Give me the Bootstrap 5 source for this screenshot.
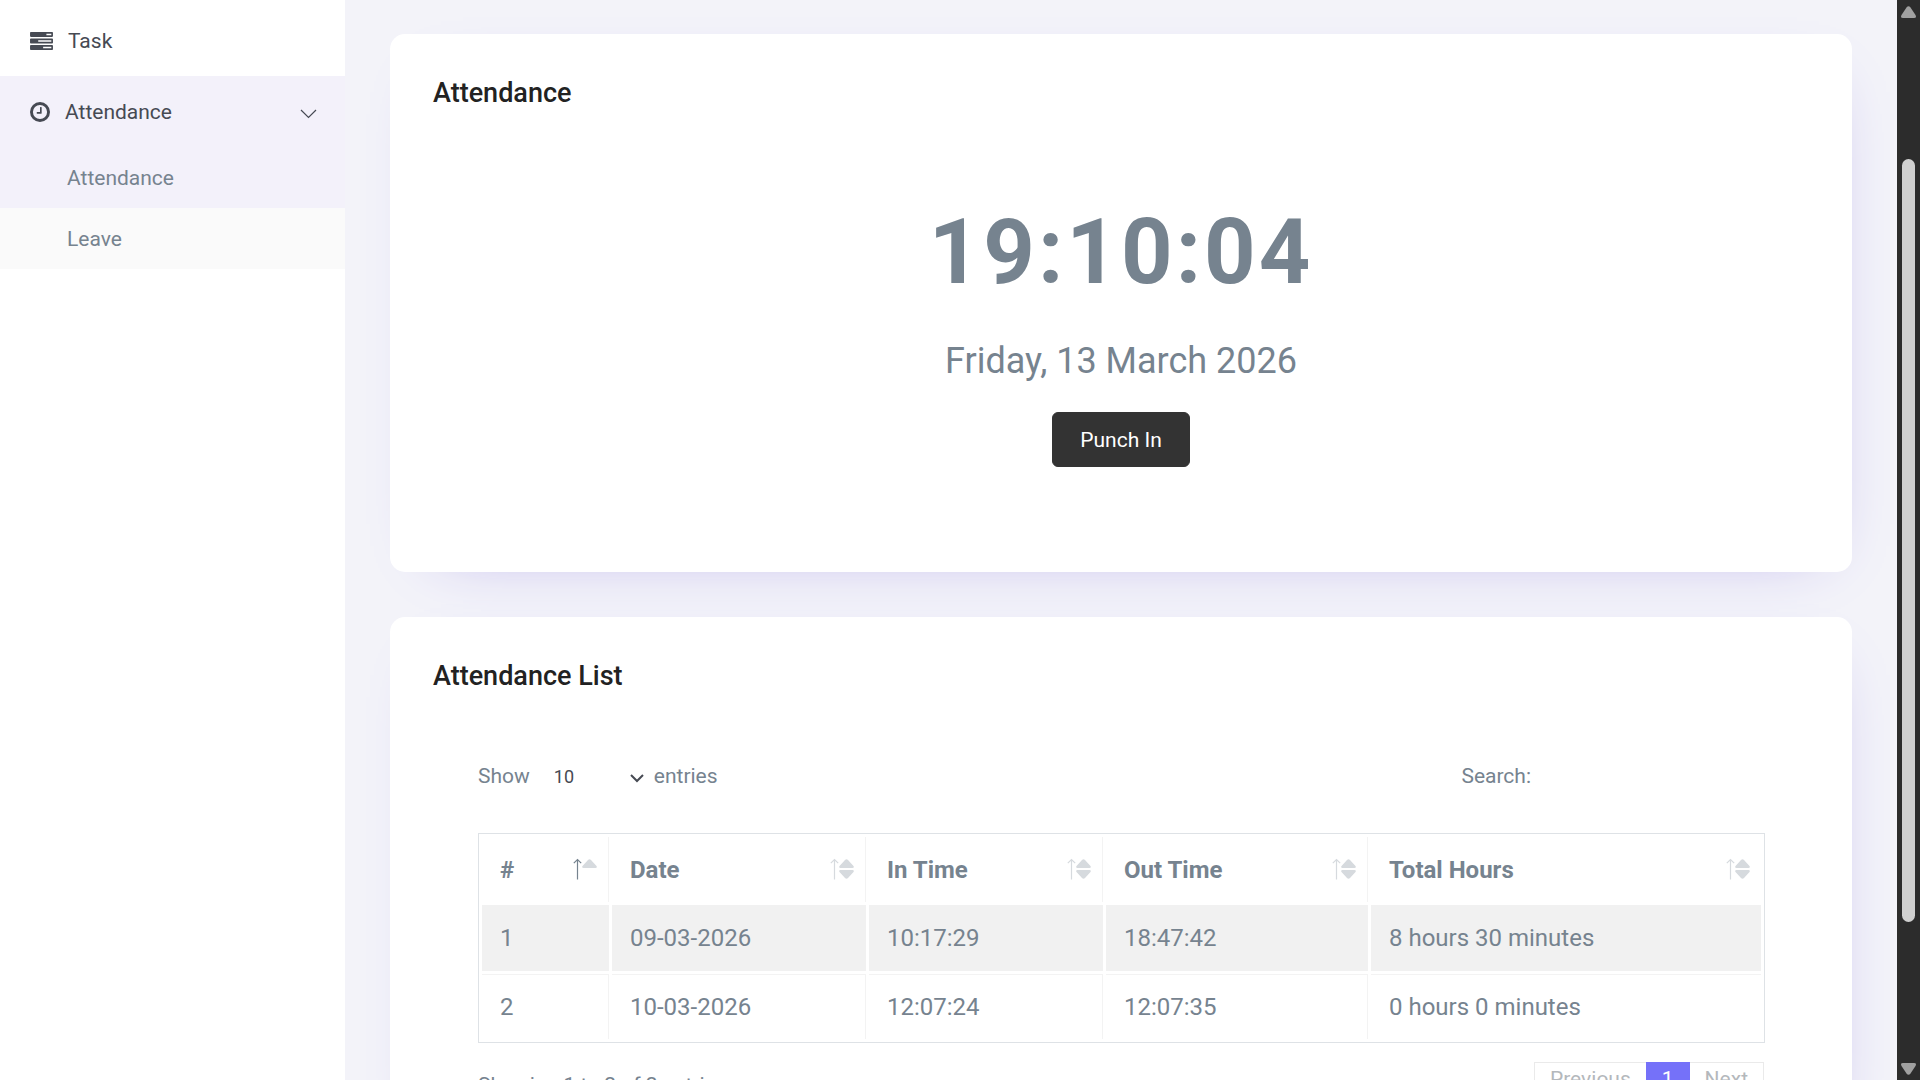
<!DOCTYPE html>
<html lang="en">
<head>
<meta charset="utf-8">
<meta name="viewport" content="width=device-width, initial-scale=1">
<title>Attendance</title>
<link href="https://cdn.jsdelivr.net/npm/bootstrap@5.3.0/dist/css/bootstrap.min.css" rel="stylesheet">
<style>
  body { font-family: Roboto, "Liberation Sans", sans-serif; font-size: 21px; line-height: 30px; color: #76838f; background: #f3f3f9; }
  a { text-decoration: none; }

  .side-panel { width: 345px; padding-top: 5px; }
  .side-link { display: flex; align-items: center; gap: 15px; height: 71px; padding: 0 28px 0 30px; color: #464a53; }
  .side-link.open { background: #f3f1fa; }
  .side-link svg { fill: currentColor; }
  .side-sub a { display: flex; align-items: center; height: 61px; padding-left: 67px; color: #76838f; background: #fafafa; }
  .side-sub a.current { background: #f3f1fa; }

  .main-area { padding: 34px 45px; }
  .panel { border: 0; border-radius: 15px; padding: 44px 43px; box-shadow: 9px 16px 62px -42px #a99de7; margin-bottom: 45px; }
  .panel-title { font-size: 27px; line-height: 30px; font-weight: 500; color: #222; margin: 0; }

  .clock-box { padding: 91px 0 61px; }
  .clock-time { font-size: 90px; line-height: 108px; font-weight: 700; letter-spacing: 3px; }
  .clock-date { font-size: 36px; line-height: 44px; margin: 32px 0 29px; }
  .btn-punch { --bs-btn-color: #fff; --bs-btn-bg: #333; --bs-btn-border-color: #333; --bs-btn-hover-color: #fff; --bs-btn-hover-bg: #222; --bs-btn-hover-border-color: #222;
    font-size: 21px; line-height: 31px; padding: 12px 27px 10px; border-radius: 6px; }

  .list-box { padding: 58px 45px 0; }
  .list-tools { height: 54px; margin-bottom: 30px; }
  .len-select { width: 104px; height: 54px; margin: 0 10px; padding: 0 20px 0 14px; border: 0; font-size: 18px; color: #464a53; background-color: transparent;
    background-image: url("data:image/svg+xml,%3csvg xmlns='http://www.w3.org/2000/svg' viewBox='0 0 14 10'%3e%3cpath fill='none' stroke='%23464a53' stroke-width='2' d='M1 1l6 6 6-6'/%3e%3c/svg%3e");
    background-size: 14px 10px; background-position: right 0 top 25px; }
  .find-input { width: 225px; height: 54px; border: 0; margin-left: 8px; background: transparent; }

  .att-table { table-layout: fixed; border-collapse: separate; border-spacing: 3px; border: 1px solid #dee2e6; font-size: 24px; line-height: 35px; color: #76838f; margin: 0; }
  .att-table th, .att-table td { padding: 15px 17px 15px 18px; border: 0 solid #f3f3f3; border-right-width: 1px; background: transparent; box-shadow: none; color: #76838f; }
  .att-table td { border-top-width: 1px; }
  .att-table tbody tr:last-child td { padding-bottom: 14px; }
  .att-table th:last-child, .att-table td:last-child { border-right-width: 0; }
  .att-table tbody tr:nth-child(odd) td { background: #f1f1f1; border-color: #f1f1f1; }
  .att-table th { position: relative; font-weight: 700; padding-top: 16px; padding-bottom: 14px; }
  .sort-mark { position: absolute; right: 11px; top: 21px; width: 24px; height: 22px; color: #d6dade; }
  .asc .sort-mark .shaft { stroke: #76838f; }

  .info-line { padding-top: 27px; }
  .pager { margin-top: 19px; --bs-pagination-border-radius: 0; }
  .pager .page-link { font-size: 21px; line-height: 26px; padding: 3px 15px 7px; color: #b4b8bc; background: #fff; border: 1px solid #eaeaea; border-radius: 0; }
  .pager .active .page-link { color: #fff; background: #7571f9; border-color: #7571f9; }

  .scroll-rail { width: 23px; background: #2c2c2c; padding: 6px 0 5px; }
  .scroll-gap { flex: 141 0 0; }
  .scroll-thumb { width: 13px; flex: 763 0 0; border-radius: 7px; background: #d0d0d0; }
</style>
<script src="https://cdn.jsdelivr.net/npm/bootstrap@5.3.0/dist/js/bootstrap.bundle.min.js"></script>
</head>
<body>
<div class="d-flex vh-100 overflow-hidden">
  <nav class="side-panel bg-white flex-shrink-0">
    <a class="side-link" href="#task">
      <svg width="23" height="18" viewBox="0 0 1792 1408"><path fill-rule="evenodd" d="M64 0h1664q64 0 64 64v256q0 64-64 64H64Q0 384 0 320V64Q0 0 64 0zM1280 128v128h384V128zM64 512h1664q64 0 64 64v256q0 64-64 64H64Q0 896 0 832V576Q0 512 64 512zM640 640v128h1024V640zM64 1024h1664q64 0 64 64v256q0 64-64 64H64Q0 1408 0 1344v-256Q0 1024 64 1024zM1024 1152v128h640v-128z"/></svg>
      <span>Task</span>
    </a>
    <a class="side-link open" href="#attendance">
      <svg width="20" height="20" viewBox="0 0 1536 1536"><path fill-rule="evenodd" d="M768 0a768 768 0 1 1 0 1536a768 768 0 1 1 0-1536zM768 224a544 544 0 1 0 0 1088a544 544 0 1 0 0-1088zM800 384h64q32 0 32 32v448q0 32-32 32H544q-32 0-32-32v-64q0-32 32-32h224V416q0-32 32-32z"/></svg>
      <span>Attendance</span>
      <svg class="ms-auto mt-1" width="17" height="10" viewBox="0 0 17 10"><path d="M1 1l7.500 7.500L16 1" fill="none" stroke="currentColor" stroke-width="1.200"/></svg>
    </a>
    <div class="side-sub">
      <a class="current" href="#attendance">Attendance</a>
      <a href="#leave">Leave</a>
    </div>
  </nav>

  <main class="main-area flex-grow-1 overflow-hidden">
    <section class="card panel">
      <h4 class="panel-title">Attendance</h4>
      <div class="clock-box text-center">
        <div class="clock-time">19:10:04</div>
        <div class="clock-date">Friday, 13 March 2026</div>
        <button type="button" class="btn btn-punch">Punch In</button>
      </div>
    </section>

    <section class="card panel">
      <h4 class="panel-title">Attendance List</h4>
      <div class="list-box">
        <div class="list-tools d-flex justify-content-between align-items-center">
          <div class="d-flex align-items-center">
            <label for="len">Show</label>
            <select id="len" class="form-select len-select"><option>10</option><option>25</option><option>50</option><option>100</option></select>
            <label for="len">entries</label>
          </div>
          <div class="d-flex align-items-center">
            <label for="find">Search:</label>
            <input id="find" type="search" class="find-input">
          </div>
        </div>
        <table class="table att-table w-100">
          <colgroup><col style="width:127px"><col style="width:254px"><col style="width:234px"><col style="width:262px"><col style="width:390px"></colgroup>
          <thead>
            <tr>
              <th class="asc">#<svg class="sort-mark" viewBox="0 0 24 22"><path class="shaft" d="M4.500 21.500V2M.8 5.200 4.500 1.500l3.700 3.700" fill="none" stroke="currentColor" stroke-width="1.200"/><path fill="currentColor" d="M15 2q1.500-1.500 3 0l5.500 6q1 2-1 2h-12q-2 0-1-2z"/></svg></th>
              <th>Date<svg class="sort-mark" viewBox="0 0 24 22"><path d="M4.500 21.500V2M.8 5.200 4.500 1.500l3.700 3.700" fill="none" stroke="currentColor" stroke-width="1.200"/><path fill="currentColor" d="M15 2q1.500-1.500 3 0l5.500 6q1 2-1 2h-12q-2 0-1-2zM15 20q1.500 1.500 3 0l5.500-6q1-2-1-2h-12q-2 0-1 2z"/></svg></th>
              <th>In Time<svg class="sort-mark" viewBox="0 0 24 22"><path d="M4.500 21.500V2M.8 5.200 4.500 1.500l3.700 3.700" fill="none" stroke="currentColor" stroke-width="1.200"/><path fill="currentColor" d="M15 2q1.500-1.500 3 0l5.500 6q1 2-1 2h-12q-2 0-1-2zM15 20q1.500 1.500 3 0l5.500-6q1-2-1-2h-12q-2 0-1 2z"/></svg></th>
              <th>Out Time<svg class="sort-mark" viewBox="0 0 24 22"><path d="M4.500 21.500V2M.8 5.200 4.500 1.500l3.700 3.700" fill="none" stroke="currentColor" stroke-width="1.200"/><path fill="currentColor" d="M15 2q1.500-1.500 3 0l5.500 6q1 2-1 2h-12q-2 0-1-2zM15 20q1.500 1.500 3 0l5.500-6q1-2-1-2h-12q-2 0-1 2z"/></svg></th>
              <th>Total Hours<svg class="sort-mark" viewBox="0 0 24 22"><path d="M4.500 21.500V2M.8 5.200 4.500 1.500l3.700 3.700" fill="none" stroke="currentColor" stroke-width="1.200"/><path fill="currentColor" d="M15 2q1.500-1.500 3 0l5.500 6q1 2-1 2h-12q-2 0-1-2zM15 20q1.500 1.500 3 0l5.500-6q1-2-1-2h-12q-2 0-1 2z"/></svg></th>
            </tr>
          </thead>
          <tbody>
            <tr><td>1</td><td>09-03-2026</td><td>10:17:29</td><td>18:47:42</td><td>8 hours 30 minutes</td></tr>
            <tr><td>2</td><td>10-03-2026</td><td>12:07:24</td><td>12:07:35</td><td>0 hours 0 minutes</td></tr>
          </tbody>
        </table>
        <div class="d-flex justify-content-between align-items-start">
          <div class="info-line">Showing 1 to 2 of 2 entries</div>
          <ul class="pagination pager mb-0">
            <li class="page-item"><a class="page-link" href="#prev">Previous</a></li>
            <li class="page-item active"><a class="page-link" href="#1">1</a></li>
            <li class="page-item"><a class="page-link" href="#next">Next</a></li>
          </ul>
        </div>
      </div>
    </section>
  </main>

  <div class="scroll-rail d-flex flex-column align-items-center flex-shrink-0" aria-hidden="true">
    <svg width="15" height="12" viewBox="0 0 15 12"><path fill="#a0a0a0" d="M5.500 1.500q2-2.500 4 0l5 7.500q1.500 3-1.500 3H2Q-1 12 .5 9z"/></svg>
    <div class="scroll-gap"></div>
    <div class="scroll-thumb"></div>
    <div class="scroll-gap"></div>
    <svg width="15" height="12" viewBox="0 0 15 12"><path fill="#a0a0a0" d="M5.500 10.500q2 2.500 4 0l5-7.500Q16 0 13 0H2Q-1 0 .5 3z"/></svg>
  </div>
</div>
</body>
</html>
